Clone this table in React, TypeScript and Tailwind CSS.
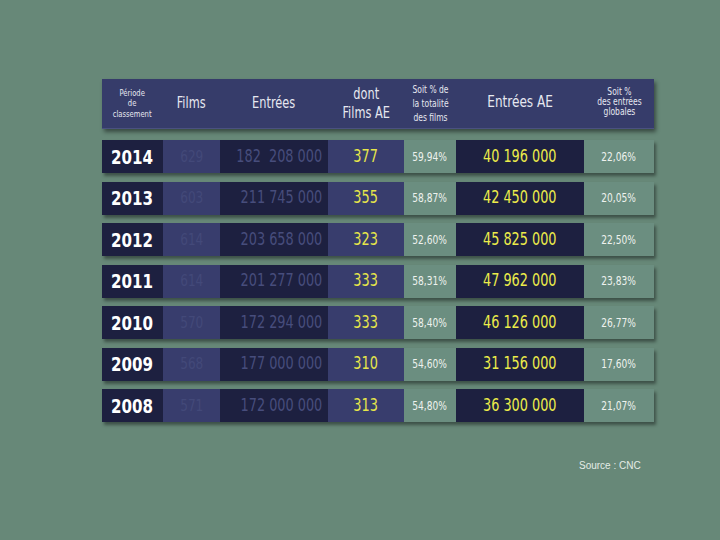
const font = { fontFamily: '"DejaVu Sans Condensed", "Liberation Sans", sans-serif' };

const rows = [
  { year: "2014", films: "629", entrees: "182  208 000", ae: "377", pct: "59,94%", entreesAe: "40 196 000", glob: "22,06%" },
  { year: "2013", films: "603", entrees: "211 745 000", ae: "355", pct: "58,87%", entreesAe: "42 450 000", glob: "20,05%" },
  { year: "2012", films: "614", entrees: "203 658 000", ae: "323", pct: "52,60%", entreesAe: "45 825 000", glob: "22,50%" },
  { year: "2011", films: "614", entrees: "201 277 000", ae: "333", pct: "58,31%", entreesAe: "47 962 000", glob: "23,83%" },
  { year: "2010", films: "570", entrees: "172 294 000", ae: "333", pct: "58,40%", entreesAe: "46 126 000", glob: "26,77%" },
  { year: "2009", films: "568", entrees: "177 000 000", ae: "310", pct: "54,60%", entreesAe: "31 156 000", glob: "17,60%" },
  { year: "2008", films: "571", entrees: "172 000 000", ae: "313", pct: "54,80%", entreesAe: "36 300 000", glob: "21,07%" },
];

const cols = "grid grid-cols-[61px_57px_108px_76px_52px_128px_70px]";

// narrow-font look: squeeze the condensed font a bit more
function N({ children, className = "" }: { children: React.ReactNode; className?: string }) {
  return <span className={`inline-block scale-x-[0.84] whitespace-pre ${className}`}>{children}</span>;
}

export default function App() {
  return (
    <div className="w-[720px] h-[540px] bg-[#678878] overflow-hidden relative" style={font}>
      <div className="pl-[102px] pt-[79px]">
        {/* header */}
        <div className={`${cols} h-[50px] bg-[#363c6a] border-b border-[#4a5180] shadow-[2px_3px_4px_rgba(0,0,0,0.45)] text-[#e6e8f0] w-[552px]`}>
          <div className="flex items-center justify-center text-center text-[9px] leading-[10.5px]">
            <N>Période<br />de<br />classement</N>
          </div>
          <div className="flex items-center justify-center text-[15px]"><N>Films</N></div>
          <div className="flex items-center justify-center text-[15px]"><N>Entrées</N></div>
          <div className="flex items-center justify-center text-center text-[15px] leading-[19px]">
            <N>dont<br />Films AE</N>
          </div>
          <div className="flex items-center justify-center text-center text-[10px] leading-[14px]">
            <N>Soit % de<br />la totalité<br />des films</N>
          </div>
          <div className="flex items-center justify-center text-[16px] pb-[4px]"><N>Entrées AE</N></div>
          <div className="flex items-start justify-center text-center text-[10px] leading-[10px] pt-[8px]">
            <N>Soit %<br />des entrées<br />globales</N>
          </div>
        </div>

        {/* rows */}
        <div className="flex flex-col gap-[8.5px] mt-[11px] w-[552px]">
          {rows.map((r) => (
            <div key={r.year} className={`${cols} h-[33px] shadow-[2px_3px_3px_rgba(0,0,0,0.4)]`}>
              <div className="bg-[#1d2040] flex items-center justify-center text-white font-bold text-[20px]"><N>{r.year}</N></div>
              <div className="bg-[#383d6d] flex items-center justify-center text-[#434979] text-[16px]"><N>{r.films}</N></div>
              <div className="bg-[#1d2040] flex items-center justify-end pr-[6px] text-[#474d7c] text-[17px]"><N className="origin-right">{r.entrees}</N></div>
              <div className="bg-[#383d6d] flex items-center justify-center text-[#e6e64a] text-[17px]"><N>{r.ae}</N></div>
              <div className="bg-[#6b8e80] flex items-center justify-center text-[#eef2ee] text-[12px]"><N>{r.pct}</N></div>
              <div className="bg-[#1d2040] flex items-center justify-center text-[#ecec4a] text-[17px]"><N>{r.entreesAe}</N></div>
              <div className="bg-[#6b8e80] flex items-center justify-center text-[#eef2ee] text-[12px]"><N>{r.glob}</N></div>
            </div>
          ))}
        </div>
      </div>

      <div className="absolute left-[579px] top-[458px] text-[10px] text-[#e4ece6]" style={{ fontFamily: '"Liberation Sans", Arial, sans-serif' }}>
        Source : CNC
      </div>
    </div>
  );
}
